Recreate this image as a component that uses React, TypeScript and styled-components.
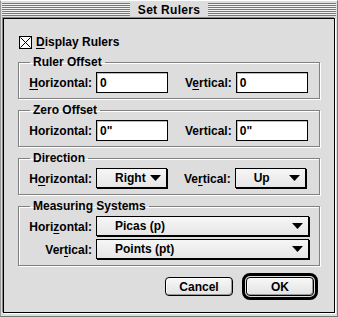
import styled, { createGlobalStyle } from "styled-components";

const GlobalStyle = createGlobalStyle`
  html, body {
    margin: 0;
    padding: 0;
    background: #dddddd;
  }
  body {
    font-family: "Liberation Sans", Arial, sans-serif;
    font-size: 12px;
    font-weight: bold;
    color: #000;
  }
`;

function App() {
  return (
    <>
      <GlobalStyle />
      <Window>
        <TitleBar>
          <Stripes />
          <Title>Set Rulers</Title>
          <Stripes />
        </TitleBar>

        <Body>
          <CheckRow>
            <CheckBox>
              <svg width="11" height="11" viewBox="0 0 11 11">
                <path d="M0.5 0.5 L10.5 10.5 M10.5 0.5 L0.5 10.5" stroke="#000" strokeWidth="1" />
              </svg>
            </CheckBox>
            <span>
              <U>D</U>isplay Rulers
            </span>
          </CheckRow>

          {/* Ruler Offset */}
          <Group>
            <Legend>Ruler Offset</Legend>
            <Row>
              <Label>
                <U>H</U>orizontal:
              </Label>
              <Field defaultValue="0" />
              <Label $second>
                V<U>e</U>rtical:
              </Label>
              <Field defaultValue="0" />
            </Row>
          </Group>

          {/* Zero Offset */}
          <Group>
            <Legend>Zero Offset</Legend>
            <Row>
              <Label>Horizontal:</Label>
              <Field defaultValue={'0"'} />
              <Label $second>Vertical:</Label>
              <Field defaultValue={'0"'} />
            </Row>
          </Group>

          {/* Direction */}
          <Group>
            <Legend>Direction</Legend>
            <Row>
              <Label>
                H<U>o</U>rizontal:
              </Label>
              <Popup>
                <span>Right</span>
                <Arrow />
              </Popup>
              <Label $second>
                Ve<U>r</U>tical:
              </Label>
              <Popup>
                <span>Up</span>
                <Arrow />
              </Popup>
            </Row>
          </Group>

          {/* Measuring Systems */}
          <Group>
            <Legend>Measuring Systems</Legend>
            <Rows>
              <Row>
                <Label>
                  Hori<U>z</U>ontal:
                </Label>
                <Popup $wide>
                  <span>Picas (p)</span>
                  <Arrow />
                </Popup>
              </Row>
              <Row>
                <Label>
                  Ver<U>t</U>ical:
                </Label>
                <Popup $wide>
                  <span>Points (pt)</span>
                  <Arrow />
                </Popup>
              </Row>
            </Rows>
          </Group>

          <Footer>
            <Button>Cancel</Button>
            <DefaultRing>
              <Button>OK</Button>
            </DefaultRing>
          </Footer>
        </Body>
      </Window>
    </>
  );
}

function Arrow() {
  return (
    <svg width="11" height="6" viewBox="0 0 11 6">
      <polygon points="0,0 11,0 5.5,6" fill="#000" />
    </svg>
  );
}

const Window = styled.div`
  width: 338px;
  height: 317px;
  box-sizing: border-box;
  display: flex;
  flex-direction: column;
  background: #dddddd;
  border-left: 1px solid #999;
  border-top: 1px solid #fff;
  border-right: 1px solid #777;
  border-bottom: 1px solid #777;
`;

const TitleBar = styled.div`
  height: 17px;
  display: flex;
  align-items: center;
  padding: 0 1px;
`;

const Stripes = styled.div`
  flex: 1;
  height: 13px;
  background: repeating-linear-gradient(to bottom, #777 0 1px, #f2f2f2 1px 2px);
`;

const Title = styled.div`
  padding: 0 8px;
  font-size: 12px;
  letter-spacing: 0.3px;
`;

const Body = styled.div`
  flex: 1;
  margin: 0 2px 3px 2px;
  border: 1px solid #000;
  box-shadow: -1px -1px 0 #888, 1px 1px 0 #fff;
  padding: 16px 14px 12px 14px;
  display: flex;
  flex-direction: column;
  gap: 4px;
`;

const CheckRow = styled.div`
  display: flex;
  align-items: center;
  gap: 4px;
  padding-left: 1px;
  margin-bottom: 2px;
`;

const CheckBox = styled.div`
  width: 13px;
  height: 13px;
  box-sizing: border-box;
  border: 1px solid #000;
  background: #fff;
  display: flex;
  svg {
    display: block;
  }
`;

const U = styled.span`
  text-decoration: underline;
  text-underline-offset: 2px;
`;

const Group = styled.fieldset`
  margin: 0;
  min-width: 0;
  border: 1px solid #808080;
  box-shadow: 1px 1px 0 #fff, inset 1px 1px 0 #fff;
  padding: 3px 9px 5px 10px;
`;

const Legend = styled.legend`
  padding: 0 3px;
  margin-left: 1px;
  line-height: 14px;
`;

const Rows = styled.div`
  display: flex;
  flex-direction: column;
  gap: 2px;
`;

const Row = styled.div`
  display: flex;
  align-items: center;
`;

const Label = styled.span<{ $second?: boolean }>`
  width: ${(p) => (p.$second ? "auto" : "63px")};
  text-align: right;
  margin-left: ${(p) => (p.$second ? "17px" : "0")};
  margin-right: 4px;
  white-space: nowrap;
`;

const Field = styled.input`
  width: 72px;
  height: 21px;
  box-sizing: border-box;
  border: 1px solid #000;
  box-shadow: inset 1px 1px 0 #bbb;
  background: #fff;
  padding: 0 3px;
  font: inherit;
  outline: none;
`;

const Popup = styled.div<{ $wide?: boolean }>`
  width: ${(p) => (p.$wide ? "213px" : "71px")};
  height: 20px;
  box-sizing: border-box;
  border: 1px solid #000;
  box-shadow: 1px 1px 0 #000;
  background: linear-gradient(#f6f6f6, #e6e6e6);
  display: flex;
  align-items: center;
  justify-content: space-between;
  padding: 0 5px 0 18px;
  margin-bottom: 1px;
  svg {
    display: block;
  }
`;

const Footer = styled.div`
  margin-top: auto;
  display: flex;
  justify-content: flex-end;
  align-items: center;
  gap: 9px;
  padding-right: 2px;
`;

const Button = styled.div`
  width: 68px;
  height: 19px;
  box-sizing: border-box;
  border: 1px solid #000;
  border-radius: 4px;
  background: linear-gradient(#f8f8f8, #e2e2e2);
  box-shadow: inset -1px -1px 0 #999, inset 1px 1px 0 #fff;
  display: flex;
  align-items: center;
  justify-content: center;
`;

const DefaultRing = styled.div`
  border: 3px solid #000;
  border-radius: 8px;
  padding: 1px;
`;

export default App;
